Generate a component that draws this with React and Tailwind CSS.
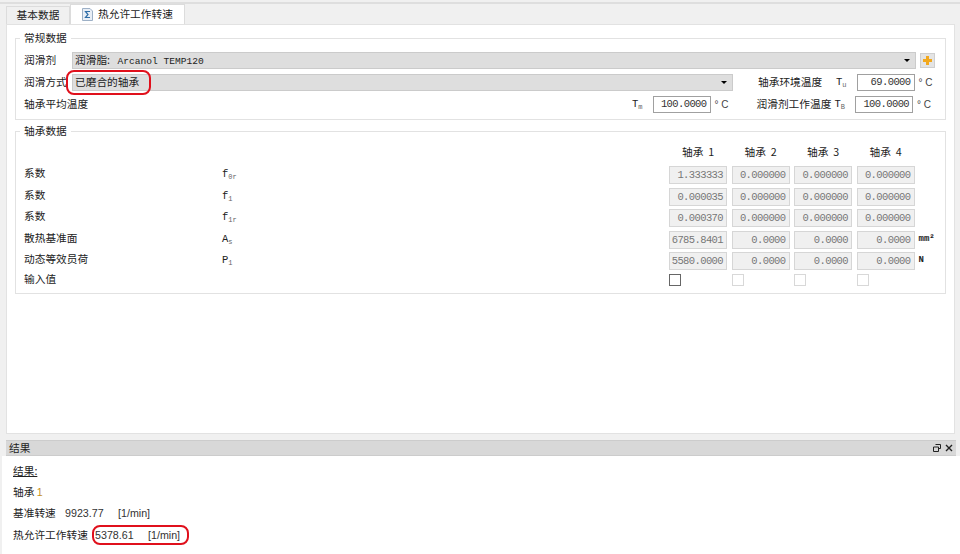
import React from 'react';

const cjk = { fontFamily: '"Noto Sans CJK SC", sans-serif' };
const mono = "font-['Liberation_Mono',monospace]";

const Sym = ({ base, sub }) => (
  <span className="font-['Liberation_Mono',monospace] text-[10.5px] text-[#222]">
    {base}
    <sub className="text-[7px] align-[-2px] bottom-0 text-[#666]">{sub}</sub>
  </span>
);

const ValueBox = ({ value }) => (
  <div className="w-[58px] h-[18px] shrink-0 border border-[#d6d6d6] bg-[#f0f0f0] pr-[3px] text-right font-['Liberation_Mono',monospace] text-[10.5px] tracking-[-0.6px] leading-[16px] text-[#777]">
    {value}
  </div>
);

const Select = ({ children, className }) => (
  <div className={`h-[17px] flex items-center justify-between pl-[2px] pr-[5px] bg-[#dedede] border border-[#cbcbcb] ${className}`}>
    <span className="text-[10.7px] text-[#222] whitespace-nowrap">{children}</span>
    <span className="w-0 h-0 border-x-[3px] border-x-transparent border-t-[3px] border-t-black" />
  </div>
);

const rows = [
  { label: '系数', base: 'f', sub: '0r', values: ['1.333333', '0.000000', '0.000000', '0.000000'] },
  { label: '系数', base: 'f', sub: '1', values: ['0.000035', '0.000000', '0.000000', '0.000000'] },
  { label: '系数', base: 'f', sub: '1r', values: ['0.000370', '0.000000', '0.000000', '0.000000'] },
  { label: '散热基准面', base: 'A', sub: 's', values: ['6785.8401', '0.0000', '0.0000', '0.0000'], unit: 'mm²' },
  { label: '动态等效员荷', base: 'P', sub: '1', values: ['5580.0000', '0.0000', '0.0000', '0.0000'], unit: 'N' },
];

const Group = ({ title, className, children }) => (
  <div className={`relative border border-[#e2e2e2] ${className}`}>
    <span className="absolute -top-[8px] left-[4px] bg-white px-[4px] text-[10.7px] leading-[14px] text-[#222]">{title}</span>
    {children}
  </div>
);

function TempBox({ value }) {
  return (
    <div className="w-[58px] h-[17px] border border-[#a0a0a0] bg-white pr-[3px] text-right font-['Liberation_Mono',monospace] text-[10.5px] tracking-[-0.6px] leading-[15px] text-[#333]">
      {value}
    </div>
  );
}

const Deg = () => <span className="ml-[4px] text-[10px] text-[#444] font-['Liberation_Sans',sans-serif]">° C</span>;

export default function App() {
  return (
    <div className="relative w-[960px] h-[554px] overflow-hidden flex flex-col bg-[#f0f0f0] text-[10.7px] text-[#222]" style={cjk}>
      <div className="h-[4px] shrink-0 border-b-2 border-[#dedede]" />
      <div className="h-[20px] shrink-0 flex items-end pl-[6px]">
        <div className="h-[18px] w-[64px] flex items-center justify-center bg-[#f0f0f0] border border-b-0 border-[#dcdcdc]">基本数据</div>
        <div className="h-[20px] w-[115px] flex items-center gap-[5px] pl-[11px] bg-white border border-b-0 border-[#dcdcdc]">
          <svg width="11" height="13" viewBox="0 0 11 13">
            <path d="M.5 .5h7.5l2.5 2.5v9.5H.5z" fill="#e8eef6" stroke="#9db0c6" />
            <path d="M8 3.5H3.5L6 6.5L3.5 9.5H8" fill="none" stroke="#2f6ea8" strokeWidth="1.2" />
          </svg>
          热允许工作转速
        </div>
      </div>

      <div className="ml-[6px] mr-[5px] h-[410px] shrink-0 bg-white border border-[#e2e2e2] px-[8px] pt-[13px] flex flex-col gap-[11px]">
        <Group title="常规数据" className="h-[82px] shrink-0 pt-[13px] pl-[8px] flex flex-col gap-[5px]">
          <div className="flex items-center h-[17px]">
            <span className="w-[48px]">润滑剂</span>
            <Select className="w-[844px]">
              润滑脂: <span className={`${mono} ml-[5px] text-[9.6px]`}>Arcanol TEMP120</span>
            </Select>
            <div className="ml-[4px] w-[15px] h-[15px] bg-[#e4e4e4] border border-[#cfcfcf] flex items-center justify-center">
              <svg width="11" height="11" viewBox="0 0 11 11">
                <path d="M4 1h3v3h3v3H7v3H4V7H1V4h3z" fill="#f2a81d" />
              </svg>
            </div>
          </div>
          <div className="flex items-center h-[17px]">
            <span className="w-[48px] whitespace-nowrap -mt-[1px]">润滑方式</span>
            <Select className="w-[661px]">已磨合的轴承</Select>
            <span className="ml-[25px] w-[78px] whitespace-nowrap -mt-[1px]">轴承环境温度</span>
            <Sym base="T" sub="u" />
            <div className="ml-[10px]"><TempBox value="69.0000" /></div>
            <Deg />
          </div>
          <div className="flex items-center h-[17px]">
            <span className="w-[608px] -mt-[1px]">轴承平均温度</span>
            <Sym base="T" sub="m" />
            <div className="ml-[10px]"><TempBox value="100.0000" /></div>
            <Deg />
            <span className="ml-[28px] w-[78px] whitespace-nowrap -mt-[1px]">润滑剂工作温度</span>
            <Sym base="T" sub="B" />
            <div className="ml-[10px]"><TempBox value="100.0000" /></div>
            <Deg />
          </div>
        </Group>

        <Group title="轴承数据" className="h-[163px] shrink-0 pl-[8px]">
          <div className="flex h-[34px] pt-[13px] pl-[645px] leading-[14px]">
            {['轴承  1', '轴承  2', '轴承  3', '轴承  4'].map((h) => (
              <span key={h} className="w-[62.5px] pl-[13px] whitespace-pre">{h}</span>
            ))}
          </div>
          <div className="flex flex-col gap-[3.5px]">
            {rows.map((r, i) => (
              <div key={i} className="flex items-center h-[18px]">
                <span className="w-[198px] shrink-0 -mt-[3px]">{r.label}</span>
                <span className="w-[447px] shrink-0 -mt-[2px]"><Sym base={r.base} sub={r.sub} /></span>
                <div className="flex gap-[4.5px]">
                  {r.values.map((v, j) => <ValueBox key={j} value={v} />)}
                </div>
                {r.unit && <span className={`ml-[4px] ${mono} text-[9px] font-bold`}>{r.unit}</span>}
              </div>
            ))}
          </div>
          <div className="flex items-center h-[14px] mt-[3px]">
            <span className="w-[645px] shrink-0 -mt-[2px]">输入值</span>
            <div className="flex">
              <div className="w-[12px] h-[12px] border border-[#666] mr-[50.5px]" />
              <div className="w-[12px] h-[12px] border border-[#d8d8d8] mr-[50.5px]" />
              <div className="w-[12px] h-[12px] border border-[#d8d8d8] mr-[50.5px]" />
              <div className="w-[12px] h-[12px] border border-[#d8d8d8]" />
            </div>
          </div>
        </Group>
      </div>

      <div className="mt-[6px] ml-[6px] mr-[4px] h-[16px] shrink-0 flex items-center justify-between px-[3px] bg-[#d8d8d8] border-y border-[#cccccc]">
        <span>结果</span>
        <div className="flex items-center gap-[4px]">
          <svg width="8" height="8" viewBox="0 0 8 8"><path d="M2.5 .5h5v4h-2M.5 3h5v4.5h-5z" fill="none" stroke="#222" /></svg>
          <svg width="8" height="8" viewBox="0 0 8 8"><path d="M1 1l6 6M7 1L1 7" stroke="#222" strokeWidth="1.4" /></svg>
        </div>
      </div>
      <div className="relative ml-[2px] flex-1 bg-white pl-[11px] pt-[7px] leading-[16px]">
        <div className="underline">结果:</div>
        <div className="mt-[5px]">轴承 <span className="font-['Liberation_Sans',sans-serif] text-[#c8901a]">1</span></div>
        <div className="mt-[5px] flex">
          <span className="w-[52px]">基准转速</span>
          <span className="w-[53px] font-['Liberation_Sans',sans-serif] text-[#333]">9923.77</span>
          <span className="font-['Liberation_Sans',sans-serif] text-[#333]">[1/min]</span>
        </div>
        <div className="mt-[6px] flex">
          <span className="w-[82px] whitespace-nowrap">热允许工作转速</span>
          <span className="w-[53px] font-['Liberation_Sans',sans-serif] text-[#333]">5378.61</span>
          <span className="font-['Liberation_Sans',sans-serif] text-[#333]">[1/min]</span>
        </div>
        <div className="absolute left-[90px] top-[69px] w-[97px] h-[20px] border-2 border-[#e0101c] rounded-[8px]" />
      </div>

      <div className="absolute left-[66px] top-[70px] w-[85px] h-[25px] border-2 border-[#e0101c] rounded-[8px]" />
    </div>
  );
}
